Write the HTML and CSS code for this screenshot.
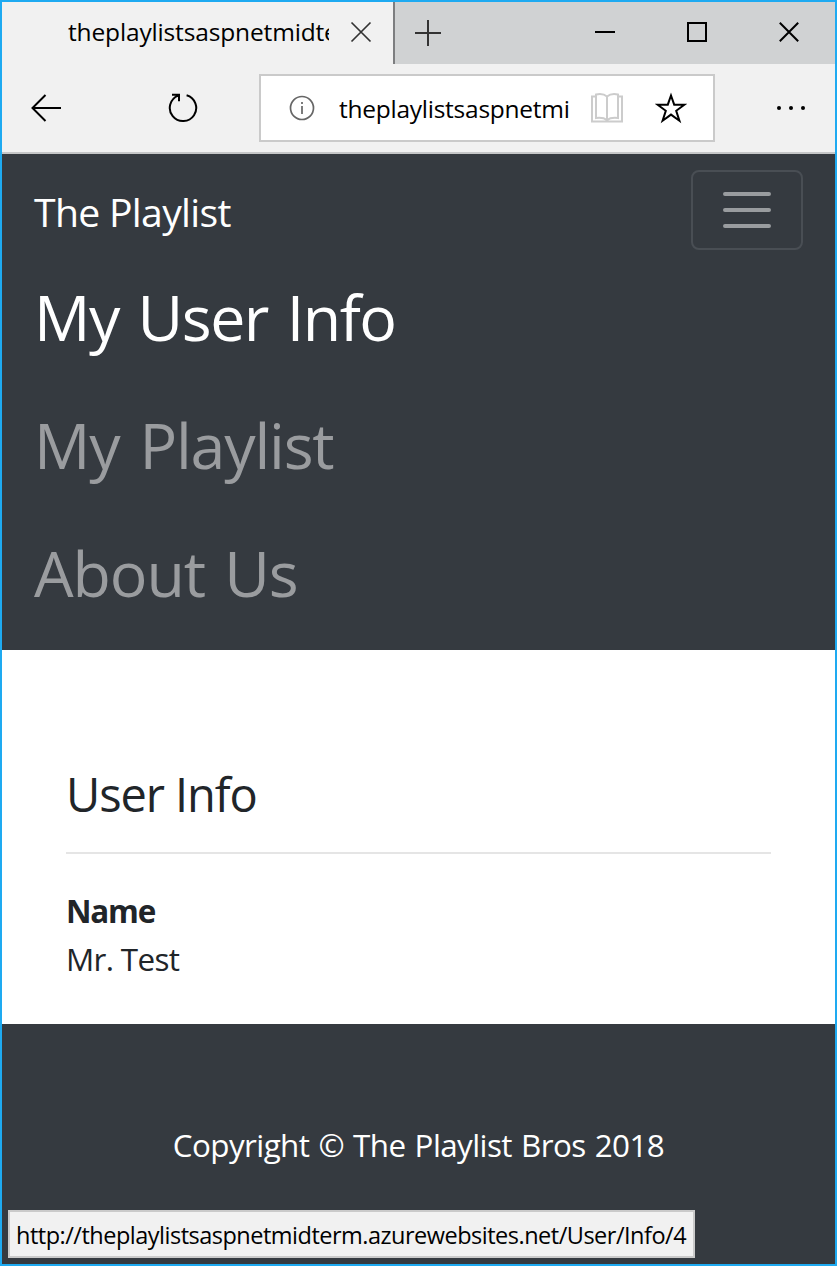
FILE: index.html
```html
<!DOCTYPE html>
<html lang="en">
<head>
<meta charset="utf-8">
<title>The Playlist</title>
<link rel="stylesheet" href="styles.css">
</head>
<body>
<div class="window">
  <header class="titlebar">
    <div class="tab">
      <span class="tab-title">theplaylistsaspnetmidterm</span>
      <svg class="tab-close" width="22" height="22" viewBox="0 0 22 22"><path d="M1.5 1.5 20.5 20.5M20.5 1.5 1.5 20.5"/></svg>
    </div>
    <svg class="new-tab" width="26" height="26" viewBox="0 0 26 26"><path d="M0 13H26M13 0V26"/></svg>
    <div class="window-buttons">
      <svg width="22" height="22" viewBox="0 0 22 22"><path d="M1 11H21"/></svg>
      <svg width="22" height="22" viewBox="0 0 22 22"><path d="M2 2H20V20H2Z"/></svg>
      <svg width="22" height="22" viewBox="0 0 22 22"><path d="M1.8 1.8 20.2 20.2M20.2 1.8 1.8 20.2"/></svg>
    </div>
  </header>
  <div class="toolbar">
    <svg class="back" width="30" height="28" viewBox="0 0 30 28"><path d="M1.5 14H30M14.5 1 1.5 14 14.5 27"/></svg>
    <svg class="reload" width="30" height="30" viewBox="0 0 30 30"><path d="M18.6 2.2A13.2 13.2 0 1 1 10.2 2.6M4 1.8H11V8.2"/></svg>
    <div class="address">
      <svg class="info" width="26" height="26" viewBox="0 0 26 26"><circle cx="13" cy="13" r="11.5"/><path d="M13 11V19M13 7V9"/></svg>
      <span class="address-text">theplaylistsaspnetmidterm</span>
      <svg class="book" width="32" height="30" viewBox="0 0 32 30"><path d="M5 3.5H1V28.5H31V3.5H27M5 1.5Q12 0 16 3.5Q20 0 27 1.5V25Q20 24 16 27Q12 24 5 25ZM16 3.5V27"/></svg>
      <svg class="star" width="32" height="32" viewBox="0 0 32 32"><path d="M16 3.5 19.2 12.7H29.3L21.2 18.8 24.4 28.7 16 22.6 7.6 28.7 10.8 18.8 2.7 12.7H12.8Z"/></svg>
    </div>
    <svg class="more" width="30" height="6" viewBox="0 0 30 6"><circle cx="3" cy="3" r="2"/><circle cx="15" cy="3" r="2"/><circle cx="27" cy="3" r="2"/></svg>
  </div>
  <nav class="navbar">
    <div class="navbar-top">
      <a class="brand">The Playlist</a>
      <button class="toggler" aria-label="Toggle navigation">
        <svg width="60" height="60" viewBox="0 0 30 30"><path d="M4 7h22M4 15h22M4 23h22"/></svg>
      </button>
    </div>
    <a class="nav-link active">My User Info</a>
    <a class="nav-link playlist">My Playlist</a>
    <a class="nav-link about">About Us</a>
  </nav>
  <main class="content">
    <h3 class="heading">User Info</h3>
    <hr class="rule">
    <dl class="details">
      <dt>Name</dt>
      <dd>Mr. Test</dd>
    </dl>
  </main>
  <footer class="footer"><p class="copyright">Copyright © The Playlist Bros 2018</p></footer>
  <div class="status">http://theplaylistsaspnetmidterm.azurewebsites.net/User/Info/4</div>
</div>
</body>
</html>
```
FILE: styles.css
```css
* { box-sizing: border-box; }
body { margin: 0; font-family: "Open Sans", "Noto Sans", sans-serif; color: #212529; }
svg { display: block; flex: none; fill: none; stroke: #000; stroke-width: 2; }

.window {
  position: relative;
  display: flex;
  flex-direction: column;
  width: 837px;
  height: 1266px;
  overflow: hidden;
  border: 2px solid #1eaaf1;
  background: #fff;
}

.titlebar { display: flex; align-items: center; height: 62px; flex: none; background: #d0d2d3; }
.tab {
  display: flex;
  align-items: center;
  width: 393px;
  height: 62px;
  padding: 0 0 2px 66px;
  border-right: 2px solid #7d7e80;
  background: #f1f1f1;
}
.tab-title { width: 261px; overflow: hidden; white-space: nowrap; font-size: 24.5px; letter-spacing: -0.15px; line-height: 34px; color: #000; }
.tab-close { margin-left: 21px; stroke: #333; stroke-width: 1.7; }
.new-tab { margin-left: 20px; stroke: #333; }
.window-buttons { display: flex; gap: 70px; margin: 0 35px 2px auto; }

.toolbar {
  display: flex;
  align-items: center;
  height: 90px;
  flex: none;
  padding: 0 29px;
  border-bottom: 2px solid #c5c6c7;
  background: #f1f1f1;
}
.reload { margin-left: 107px; }
.address {
  display: flex;
  align-items: center;
  width: 456px;
  height: 68px;
  margin-left: 61px;
  padding-left: 28px;
  border: 2px solid #cacaca;
  background: #fff;
}
.info { stroke: #666; stroke-width: 1.7; }
.address-text { width: 230px; margin-left: 24px; padding-top: 2px; overflow: hidden; white-space: nowrap; font-size: 24.5px; letter-spacing: -0.25px; line-height: 36px; color: #000; }
.book { margin-left: 22px; stroke: #ccc; }
.star { margin-left: 32px; }
.more { margin-left: auto; fill: #000; stroke: none; }

.navbar { flex: none; height: 496px; padding: 16px 32px; background: #353a40; }
.navbar-top { display: flex; justify-content: space-between; height: 80px; }
.brand { padding-top: 12px; font-size: 39.2px; letter-spacing: -0.7px; line-height: 60px; color: #fff; }
.toggler {
  display: flex;
  align-items: center;
  justify-content: center;
  width: 112px;
  height: 80px;
  padding: 0;
  border: 2px solid #494e54;
  border-radius: 8px;
  background: none;
}
.toggler svg { stroke: #999c9f; stroke-linecap: round; }
.nav-link { display: block; padding: 19px 0 13px; font-size: 62.7px; line-height: 96px; color: #9a9c9f; white-space: nowrap; }
.nav-link.active { color: #fff; letter-spacing: -1.5px; word-spacing: 4px; }
.nav-link.playlist { letter-spacing: -1.2px; word-spacing: 5px; }
.nav-link.about { letter-spacing: -1.1px; word-spacing: 4px; }

.content { flex: none; height: 374px; padding: 115px 64px 0; }
.heading { margin: 0; font-size: 47px; font-weight: 400; letter-spacing: -1.1px; line-height: 58px; }
.rule { margin: 29px 0 33px; border: 0; border-top: 2px solid #e5e5e5; }
.details { margin: 0; font-size: 31.4px; line-height: 48px; }
.details dt { font-weight: 700; letter-spacing: -1.2px; }
.details dd { margin: 0; letter-spacing: -0.65px; }

.footer { flex: 1; padding-top: 97px; background: #353a40; }
.copyright { margin: 0; text-align: center; font-size: 31.4px; letter-spacing: -0.58px; word-spacing: 1.5px; line-height: 48px; color: #fff; }

.status {
  position: absolute;
  left: 6px;
  bottom: 6px;
  width: 687px;
  height: 48px;
  padding: 0 6px;
  border: 2px solid #cacaca;
  background: #f1f1f1;
  font-size: 23.5px;
  letter-spacing: -0.5px;
  line-height: 46px;
  white-space: nowrap;
  color: #000;
}
```
